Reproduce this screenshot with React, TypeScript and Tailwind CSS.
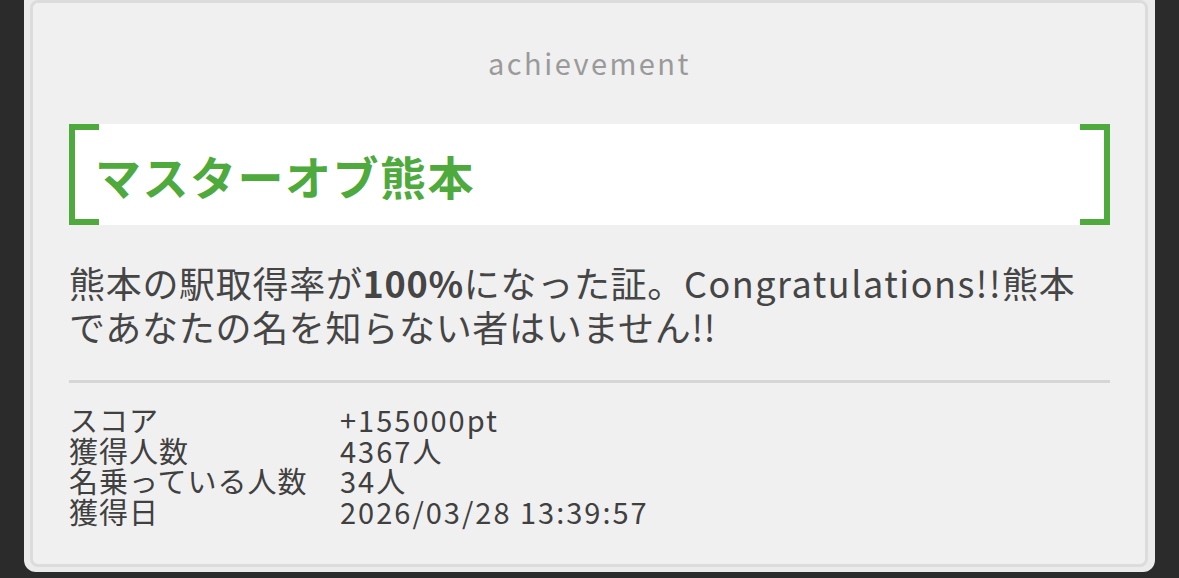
const GREEN = 'bg-[#4eaa3c]'

const STATS: [string, string][] = [
  ['スコア', '+155000pt'],
  ['獲得人数', '4367人'],
  ['名乗っている人数', '34人'],
  ['獲得日', '2026/03/28 13:39:57'],
]

function Bracket() {
  return (
    <div className="relative h-[101px] bg-white border-x-[6px] border-[#4eaa3c] flex items-center pl-[20px]">
      {/* corner tabs of the bracket */}
      <span className={`absolute left-0 top-0 w-[24px] h-[6px] ${GREEN}`} />
      <span className={`absolute left-0 bottom-0 w-[24px] h-[6px] ${GREEN}`} />
      <span className={`absolute right-0 top-0 w-[24px] h-[6px] ${GREEN}`} />
      <span className={`absolute right-0 bottom-0 w-[24px] h-[6px] ${GREEN}`} />
      <h1 className="text-[46px] leading-none font-bold text-[#4eaa3c] tracking-[1.5px]">マスターオブ熊本</h1>
    </div>
  )
}

export default function App() {
  return (
    <div
      className="w-[1179px] h-[578px] bg-[#2b2b2b] overflow-hidden"
      style={{ fontFamily: '"Noto Sans CJK JP", "Noto Sans", sans-serif' }}
    >
      <div className="ml-[24px] w-[1131px] h-[572px] bg-[#ebebeb] rounded-b-[12px] pl-[6px] pr-[7px] pb-[5px]">
        <div className="h-full border-[3px] border-[#dcdcdc] rounded-[8px] bg-[#f0f0f0] pl-[36px] pr-[35px] pt-[39px]">
          <p className="text-center text-[29px] leading-[40px] text-[#9a9a9a] tracking-[2.5px]">achievement</p>

          <div className="mt-[42px]">
            <Bracket />
          </div>

          <p className="mt-[35px] text-[36px] leading-[44px] text-[#454545] tracking-[0.7px] whitespace-nowrap">
            熊本の駅取得率が<span className="font-bold">100%</span>になった証。
            <span className="tracking-[1.5px]">Congratulations!!</span>熊本
            <br />
            であなたの名を知らない者はいません!!
          </p>

          <div className="mt-[32px] h-[3px] bg-[#d6d6d6]" />

          <div className="mt-[21px] grid grid-cols-[271px_1fr] text-[29px] leading-[30.5px] text-[#404040]">
            {STATS.map(([k, v]) => (
              <div key={k} className="contents">
                <span className="tracking-[1px]">{k}</span>
                <span className="tracking-[2px]">{v}</span>
              </div>
            ))}
          </div>
        </div>
      </div>
    </div>
  )
}
